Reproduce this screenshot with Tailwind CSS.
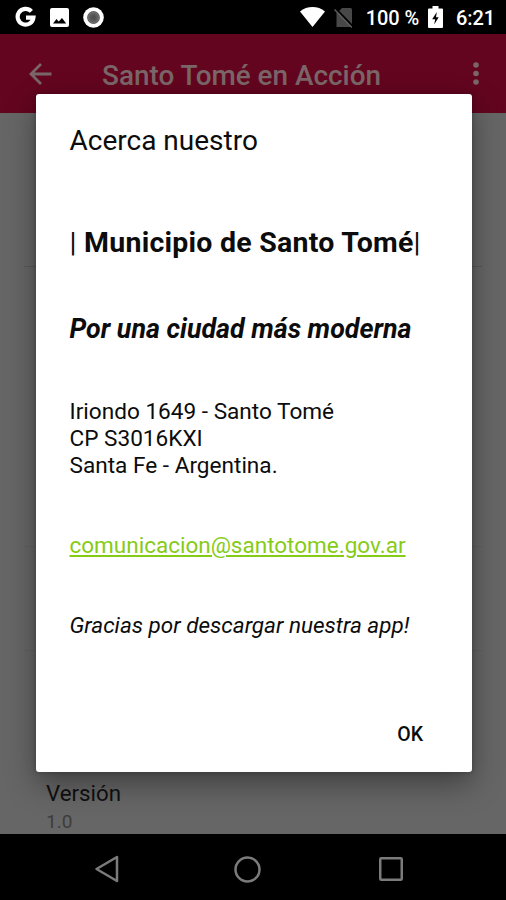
<!DOCTYPE html>
<html lang="es">
<head>
    <meta charset="UTF-8">
    <meta name="viewport" content="width=device-width, initial-scale=1.0">
    <title>Santo Tomé en Acción</title>
    <script src="https://cdn.jsdelivr.net/npm/@tailwindcss/browser@4"></script>
</head>
<body class="bg-black font-['Roboto',sans-serif]">
    <div class="relative flex h-[900px] w-[506px] flex-col overflow-hidden">
        <!-- Status bar -->
        <div class="flex h-[34px] shrink-0 items-center bg-black pl-[15px] pr-[11px] text-white">
            <svg class="h-[22px] w-[22px]" viewBox="0 0 22 22" fill="none" stroke="white" stroke-width="4.2"><path d="M16.4 5.4A7.9 7.9 0 1 0 18.4 11.7H11"/></svg>
            <svg class="ml-[13px] h-[19px] w-[19px]" viewBox="0 0 19 19"><rect width="19" height="19" rx="2" fill="white"/><path d="M3 15.5L6.5 11l2.2 2.6L12 10l4.2 5.5z" fill="black"/></svg>
            <svg class="ml-[14px] h-[21px] w-[21px]" viewBox="0 0 21 21"><circle cx="10.5" cy="10.5" r="10.3" fill="white"/><circle cx="10.5" cy="10.5" r="6.4" fill="#5c5c5c"/><circle cx="10.5" cy="10.5" r="5" fill="none" stroke="#747474"/><circle cx="10.5" cy="10.5" r="2.5" fill="#505050"/></svg>
            <svg class="ml-auto h-[20px] w-[25px]" viewBox="0 0 25 20"><path d="M0 4.5C7-1.4 18-1.4 25 4.5L12.5 20z" fill="white"/></svg>
            <svg class="ml-[9px] h-[21px] w-[20px]" viewBox="0 0 20 21"><path d="M8 1h8.5q1.5 0 1.5 1.5V20H2.5V6.5z" fill="#484848"/><path d="M1.5 1.500L19 19.500" stroke="black" stroke-width="2"/><path d="M.5 2.5L17.800 20.500" stroke="#5e5e5e" stroke-width="1.500"/></svg>
            <span class="ml-[12px] pt-px text-[20px] font-medium leading-[24px] tracking-[-0.1px] whitespace-nowrap">100 %</span>
            <svg class="ml-[9px] h-[22px] w-[15px]" viewBox="0 0 15 22"><path d="M4.500 0h6v2.500H14q1 0 1 1V21q0 1-1 1H1q-1 0-1-1V3.500q0-1 1-1h3.500z" fill="white"/><path d="M8.800 6L4.200 13.200h3L6.200 18.500l4.500-7.200H8z" fill="black"/></svg>
            <span class="ml-[13px] pt-px text-[20px] font-medium leading-[24px] tracking-[-0.1px]">6:21</span>
        </div>

        <!-- App bar -->
        <div class="flex h-[79px] shrink-0 items-center bg-[#63051f] pl-[29px] pr-[27px] text-[#7a6668]">
            <svg class="h-[22px] w-[23px]" viewBox="0 0 23 22" fill="none" stroke="currentColor" stroke-width="2.8"><path d="M22.5 11H2M12 1L2 11l10 10"/></svg>
            <h1 class="ml-[50px] pt-[4px] text-[27.9px] font-medium leading-[32px] whitespace-nowrap">Santo Tomé en Acción</h1>
            <svg class="ml-auto h-[23px] w-[6px]" viewBox="0 0 6 23" fill="currentColor"><circle cx="3" cy="3" r="2.8"/><circle cx="3" cy="11.5" r="2.8"/><circle cx="3" cy="20" r="2.8"/></svg>
        </div>

        <!-- Settings list behind the dialog -->
        <div class="flex h-[721px] shrink-0 flex-col bg-[#666] px-6">
            <div class="h-[154px] shrink-0 border-b border-[#595959]"></div>
            <div class="h-[280px] shrink-0 border-b border-[#606060]"></div>
            <div class="h-[104px] shrink-0 border-b border-[#606060]"></div>
            <div class="h-[104px] shrink-0"></div>
            <div class="mt-[25px] shrink-0 pl-[22px]">
                <p class="text-[22.3px] leading-[27px] text-[#101010]">Versión</p>
                <p class="mt-[3px] text-[19px] leading-[24px] text-[#3d3d3d]">1.0</p>
            </div>
        </div>

        <!-- Navigation bar -->
        <div class="flex h-[66px] shrink-0 items-center bg-black pt-[4px] text-[#7b7b7b]">
            <svg class="ml-[94px] h-[28px] w-[25px]" viewBox="0 0 25 28" fill="none" stroke="currentColor" stroke-width="2.5" stroke-linejoin="round"><path d="M23 2v24L2.5 14z"/></svg>
            <svg class="ml-[115px] h-[27px] w-[27px]" viewBox="0 0 27 27" fill="none" stroke="currentColor" stroke-width="2.5"><circle cx="13.5" cy="13.5" r="12"/></svg>
            <svg class="ml-[118px] h-[24px] w-[24px]" viewBox="0 0 24 24" fill="none" stroke="currentColor" stroke-width="2.5"><rect x="1.25" y="1.25" width="21.5" height="21.5" rx="1"/></svg>
        </div>

        <!-- About dialog -->
        <div class="absolute left-[36px] top-[94px] flex h-[678px] w-[436px] flex-col rounded-[3px] bg-white pl-[33.5px] pr-[34px] pt-[31px] whitespace-nowrap text-[#0c0c0c] shadow-[0_12px_30px_rgba(0,0,0,0.38),0_0_5px_rgba(0,0,0,0.25)]">
            <h2 class="text-[28px] leading-[32px]">Acerca nuestro</h2>
            <p class="mt-[70px] text-[28.5px] font-bold leading-[32px] tracking-[0.24px]"><span class="font-normal">|</span> Municipio de Santo Tomé<span class="font-normal">|</span></p>
            <p class="mt-[54px] text-[26.8px] font-bold italic leading-[32px]">Por una ciudad más moderna</p>
            <p class="mt-[53px] text-[22.6px] leading-[27px]">Iriondo 1649 - Santo Tomé<br>CP S3016KXI<br>Santa Fe - Argentina.</p>
            <p class="mt-[53px] text-[22.5px] leading-[27px]"><a href="mailto:comunicacion@santotome.gov.ar" class="text-[#86cc16] underline decoration-[1.5px] underline-offset-[2px]">comunicacion@santotome.gov.ar</a></p>
            <p class="mt-[53px] text-[22.5px] italic leading-[27px]">Gracias por descargar nuestra app!</p>
            <button class="mr-[15px] mt-[84px] self-end text-[19.5px] font-medium leading-[24px]">OK</button>
        </div>
    </div>
</body>
</html>
